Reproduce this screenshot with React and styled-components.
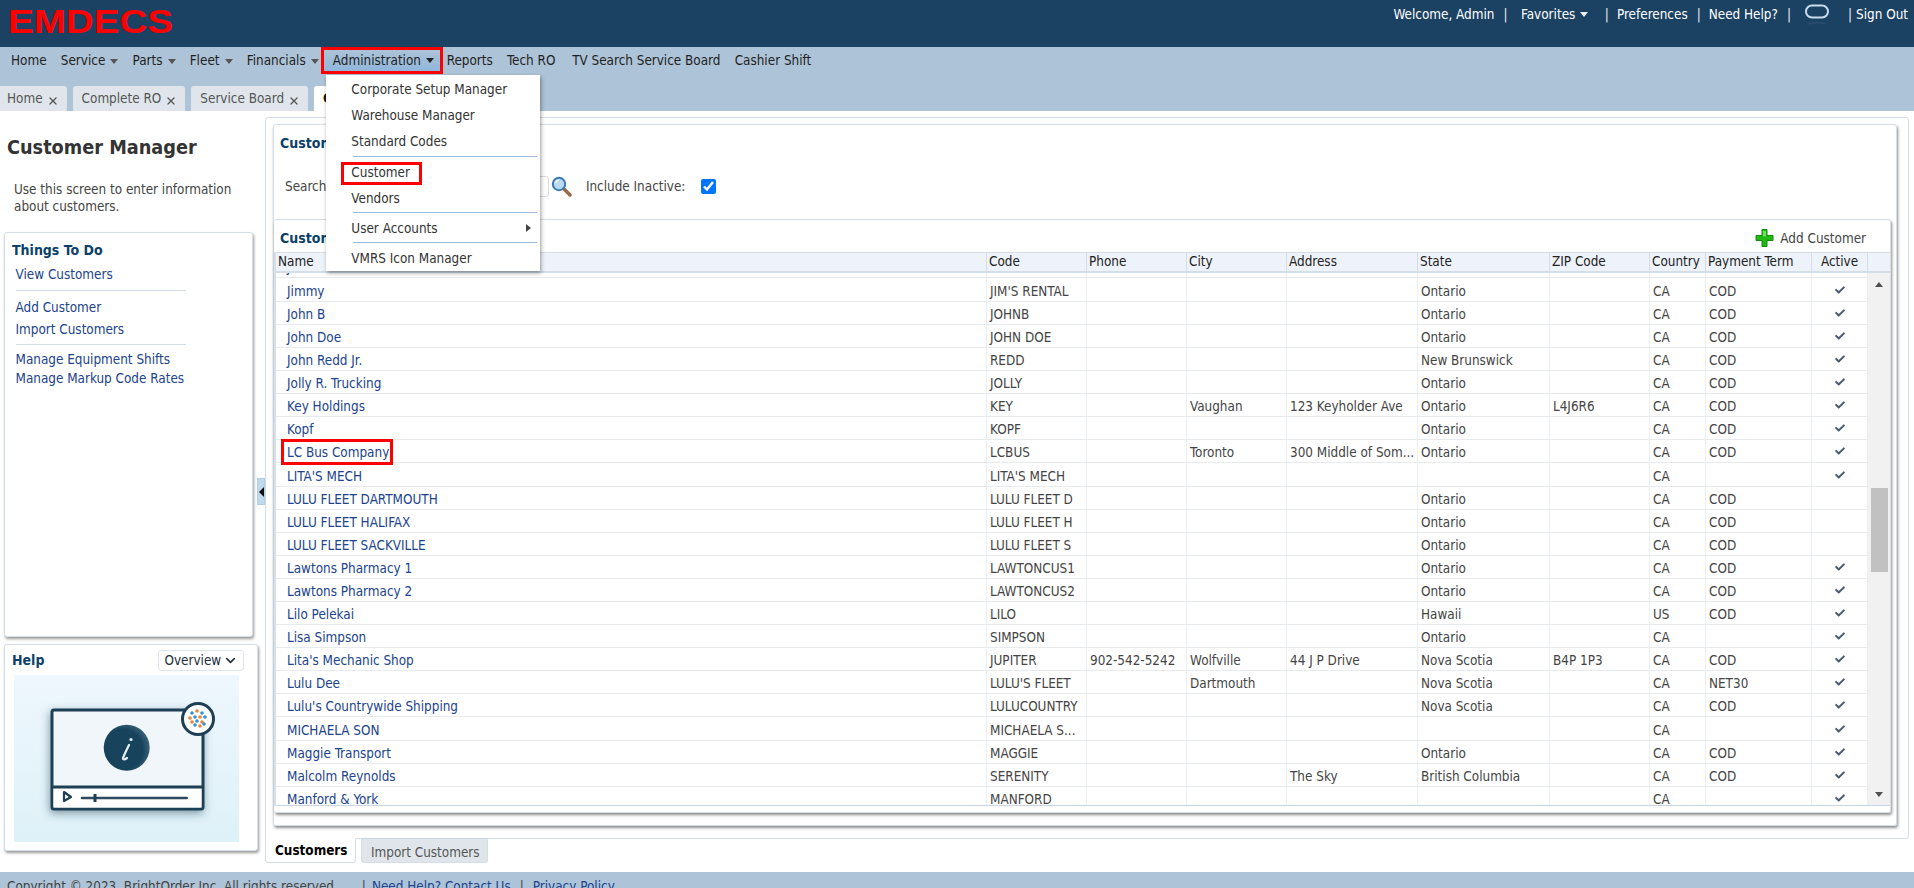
import React from "react";
import styled, { createGlobalStyle } from "styled-components";
import { X, ChevronDown } from "lucide-react";
import { FaCheck } from "react-icons/fa";

const FONT = `"DejaVu Sans Condensed", "Noto Sans", "Liberation Sans", sans-serif`;

const GlobalStyle = createGlobalStyle`
  html, body { margin: 0; padding: 0; background: #fff; }
  * { box-sizing: border-box; }
  body { font-family: ${FONT}; font-size: 13.4px; color: #444; overflow: hidden; }
`;

const Page = styled.div`
  width: 1914px;
  height: 888px;
  display: flex;
  flex-direction: column;
  overflow: hidden;
`;

/* top bar */
const TopBar = styled.header`
  height: 47px;
  flex: none;
  background: #1c4263;
  display: flex;
  justify-content: space-between;
  padding: 0 6px 0 8px;
`;
const TopLinks = styled.div`
  display: flex;
  align-items: center;
  height: 28px;
  color: #fff;
  white-space: nowrap;
`;
const TopLink = styled.span`
  display: flex;
  align-items: center;
  margin-right: ${(p) => p.$mr ?? 9}px;
`;
const Pipe = styled.span`
  margin-right: ${(p) => p.$mr ?? 8}px;
  color: #e8eef4;
`;
const DownCaret = styled.i`
  display: inline-block;
  width: 0;
  height: 0;
  margin-left: 5px;
  vertical-align: middle;
  border-left: 4.5px solid transparent;
  border-right: 4.5px solid transparent;
  border-top: 5px solid ${(p) => p.$color || "#555"};
`;

/* nav + tabs */
const NavArea = styled.div`
  height: 64px;
  flex: none;
  background: #adc3d7;
  display: flex;
  flex-direction: column;
  justify-content: space-between;
`;
const NavRow = styled.nav`
  display: flex;
  align-items: center;
  height: 27px;
  padding-left: 11px;
  gap: 14.2px;
  color: #1f1f1f;
  white-space: nowrap;
`;
const NavItem = styled.span`
  margin-left: ${(p) => p.$ml || 0}px;
`;
const NavActive = styled.span`
  position: relative;
  display: flex;
  align-items: center;
  height: 27px;
  margin: 0 -10.5px 0 -12px;
  padding: 0 6px 0 9px;
  border: 3px solid #f00;
  background: linear-gradient(#adc3d7, #8fb6dc);
`;
const Menu = styled.div`
  position: absolute;
  top: 25px;
  left: 2px;
  width: 214px;
  height: 196px;
  background: #fff;
  box-shadow: 1px 2px 4px rgba(0, 0, 0, 0.4);
  z-index: 5;
  color: #333;
  padding-top: 1px;
`;
const MenuItem = styled.div`
  position: relative;
  height: ${(p) => p.$h || 26}px;
  padding: ${(p) => p.$pt || 0}px 0 0 25.5px;
  display: flex;
  align-items: center;
  justify-content: space-between;
`;
const MenuBox = styled.span`
  position: relative;
  &::after {
    content: "";
    position: absolute;
    left: -10px;
    right: -12px;
    top: -3px;
    bottom: -5px;
    border: 3px solid #f00;
  }
`;
const MenuSep = styled.div`
  height: 1px;
  margin: ${(p) => p.$m || "0 3px 0 27px"};
  background: #9dbbdc;
`;
const RightCaret = styled.i`
  width: 0;
  height: 0;
  margin-right: 9px;
  border-top: 4.5px solid transparent;
  border-bottom: 4.5px solid transparent;
  border-left: 5px solid #444;
`;
const TabRow = styled.div`
  display: flex;
  gap: 6px;
  height: 25px;
  margin-left: -2px;
`;
const Tab = styled.div`
  display: flex;
  align-items: center;
  gap: 4px;
  padding: 0 8px 0 9px;
  border-radius: 3px 3px 0 0;
  white-space: nowrap;
  background: ${(p) => (p.$active ? "#fff" : "#dfe5eb")};
  color: ${(p) => (p.$active ? "#111" : "#555")};
  font-weight: ${(p) => (p.$active ? 700 : 400)};
  svg { margin-top: 5px; color: #555; }
`;

/* body */
const Body = styled.div`
  flex: 1;
  display: flex;
  min-height: 0;
`;
const Sidebar = styled.aside`
  width: 257px;
  flex: none;
  padding-top: 25px;
`;
const SideTitle = styled.h1`
  margin: 0 0 0 7px;
  font-size: 19.7px;
  line-height: 24px;
  font-weight: 700;
  color: #333;
`;
const SideText = styled.p`
  margin: 21px 0 17px 14px;
  line-height: 17px;
  color: #444;
`;
const Card = styled.section`
  margin-left: 4px;
  width: ${(p) => p.$w}px;
  height: ${(p) => p.$h}px;
  margin-bottom: 6.5px;
  border: 1px solid #d5dde6;
  border-radius: 3px;
  box-shadow: 1px 2px 3px rgba(0, 0, 0, 0.4);
  background: #fff;
`;
const CardTitle = styled.h2`
  margin: 0;
  font-size: 14px;
  line-height: 18px;
  font-weight: 700;
  color: #0b4169;
`;
const ThingsBody = styled.div`
  padding: 8px 0 0 7px;
`;
const SideLinks = styled.div`
  margin-top: 5px;
  padding-left: 3.5px;
  display: flex;
  flex-direction: column;
`;
const SideLink = styled.a`
  color: #20438c;
  line-height: ${(p) => p.$lh || 22}px;
`;
const SideSep = styled.div`
  height: 1px;
  width: 170px;
  margin: ${(p) => p.$m || "3.5px 0 6px"};
  background: #d5dde6;
`;
const HelpHead = styled.div`
  display: flex;
  justify-content: space-between;
  align-items: center;
  padding: 5px 13px 4px 7px;
`;
const HelpSelect = styled.div`
  width: 86px;
  height: 21px;
  display: flex;
  align-items: center;
  justify-content: space-between;
  padding: 0 5px 0 6px;
  border: 1px solid #dde5ec;
  border-radius: 3px;
  color: #222d3a;
`;
const HelpArt = styled.svg`
  display: block;
  margin-left: 9px;
`;

const Splitter = styled.div`
  width: 8px;
  flex: none;
  display: flex;
  align-items: center;
`;
const SplitHandle = styled.div`
  width: 9px;
  height: 27px;
  display: flex;
  align-items: center;
  justify-content: center;
  background: #c0d8f0;
  border: 1px solid #b4cde6;
  &::before {
    content: "";
    border-top: 5px solid transparent;
    border-bottom: 5px solid transparent;
    border-right: 5px solid #111;
  }
`;

const Main = styled.main`
  flex: 1;
  min-width: 0;
  padding: 6px 5px 9px 0;
  display: flex;
  flex-direction: column;
`;
const TabPanel = styled.div`
  flex: 1;
  min-height: 0;
  border: 1px solid #d5dde6;
  border-radius: 3px 3px 3px 0;
  padding: 6px 11px 12px 7px;
`;
const InnerPanel = styled.section`
  height: 100%;
  border: 1px solid #d5dde6;
  border-radius: 3px;
  box-shadow: 1px 2px 3px rgba(0, 0, 0, 0.45);
  padding: 0 5px 12px 0;
  display: flex;
  flex-direction: column;
`;
const PanelTitle = styled.h3`
  margin: 0;
  height: 37px;
  flex: none;
  padding: 8px 0 0 6px;
  font-size: 14px;
  line-height: 20px;
  font-weight: 700;
  color: #0b4169;
`;
const SearchRow = styled.div`
  height: 48px;
  flex: none;
  display: flex;
  align-items: center;
  padding-left: 11px;
  margin-bottom: 9px;
`;
const SearchInput = styled.input`
  width: 213px;
  height: 21px;
  margin: 0 2px 0 10px;
  border: 1px solid #d5dde6;
  border-radius: 3px;
`;
const IncludeLabel = styled.label`
  margin-left: 13.5px;
  margin-right: 15.5px;
`;
const IncludeBox = styled.input`
  width: 15px;
  height: 15px;
  margin: 0;
  accent-color: #0075ff;
`;

const GridPanel = styled.section`
  flex: 1;
  min-height: 0;
  border: 1px solid #d5dde6;
  border-left: none;
  border-radius: 3px;
  box-shadow: 1px 2px 3px rgba(0, 0, 0, 0.45);
  padding-bottom: 6px;
  display: flex;
  flex-direction: column;
`;
const GridTitleRow = styled.div`
  height: 32px;
  flex: none;
  display: flex;
  align-items: center;
  justify-content: space-between;
  padding: 4px 24px 0 6px;
`;
const GridTitle = styled.h3`
  margin: 0;
  font-size: 14px;
  font-weight: 700;
  color: #0b4169;
`;
const AddButton = styled.span`
  display: flex;
  align-items: center;
  gap: 6px;
  color: #444;
`;
const Table = styled.div`
  flex: 1;
  min-height: 0;
  display: flex;
  flex-direction: column;
  border-left: 2px solid #d5e0ea;
  border-bottom: 1px solid #c8d4e0;
`;
const COLS = "711px 100px 100px 100px 131px 132px 100px 56px 106px 56px";
const HeadRow = styled.div`
  height: 21px;
  flex: none;
  display: grid;
  grid-template-columns: ${COLS} 1fr;
  background: #eef2fa;
  border-top: 1px solid #d5dde6;
  border-bottom: 2px solid #d5dde6;
  position: relative;
  z-index: 1;
`;
const HeadCell = styled.div`
  padding-left: ${(p) => (p.$center ? 0 : 2)}px;
  text-align: ${(p) => (p.$center ? "center" : "left")};
  border-right: 1px solid #d5dde6;
  color: #222;
  line-height: 18px;
  white-space: nowrap;
  overflow: hidden;
  &:last-child { border-right: none; }
`;
const BodyWrap = styled.div`
  flex: 1;
  min-height: 0;
  display: flex;
`;
const Rows = styled.div`
  width: 1592px;
  flex: none;
  overflow: hidden;
`;
const Row = styled.div`
  height: ${(p) => (p.$tall ? 24 : 23)}px;
  margin-top: ${(p) => (p.$clip ? -18 : 0)}px;
  display: grid;
  grid-template-columns: ${COLS};
  border-bottom: 1px solid #e8ebee;
`;
const Cell = styled.div`
  padding: 3.5px 0 0 3px;
  border-right: 1px solid #eceff2;
  display: flex;
  align-items: center;
  justify-content: ${(p) => (p.$center ? "center" : "flex-start")};
  white-space: nowrap;
  overflow: hidden;
  color: #444;
`;
const CheckCell = styled(Cell)`
  padding: 0;
  justify-content: center;
`;
const NameCell = styled(Cell)`
  padding-left: 11px;
  overflow: visible;
`;
const NameLink = styled.a`
  position: relative;
  color: #20438c;
  ${(p) =>
    p.$marked &&
    `&::after {
      content: "";
      position: absolute;
      left: -6px;
      right: -4px;
      top: -6px;
      bottom: -5px;
      border: 3px solid #f00;
    }`}
`;
const ScrollTrack = styled.div`
  flex: 1;
  display: flex;
  flex-direction: column;
  align-items: center;
  background: #f1f1f1;
`;
const ScrollArrow = styled.div`
  height: 22px;
  flex: none;
  display: flex;
  align-items: center;
  justify-content: center;
  &::before {
    content: "";
    border-left: 4.5px solid transparent;
    border-right: 4.5px solid transparent;
    ${(p) => (p.$down ? "border-top" : "border-bottom")}: 5px solid #505050;
  }
`;
const ScrollThumb = styled.div`
  width: 17px;
  height: 84px;
  margin-top: 192.5px;
  margin-bottom: auto;
  background: #c1c1c1;
`;

const SubTabs = styled.div`
  height: 25px;
  flex: none;
  display: flex;
  margin-top: -1px;
`;
const SubTab = styled.div`
  height: 25px;
  padding: ${(p) => (p.$active ? "0 8px 0 9px" : "3px 7px 0 9px")};
  margin-right: ${(p) => (p.$active ? 4.5 : 0)}px;
  display: flex;
  align-items: center;
  white-space: nowrap;
  border: 1px solid #d5dde6;
  border-radius: 0 0 3px 3px;
  border-top: ${(p) => (p.$active ? "1px solid #fff" : "1px solid #c8d4e0")};
  background: ${(p) => (p.$active ? "#fff" : "#dfe5eb")};
  color: ${(p) => (p.$active ? "#000" : "#555")};
  font-weight: ${(p) => (p.$active ? 700 : 400)};
`;

const Footer = styled.footer`
  height: 16px;
  flex: none;
  background: #adc3d7;
  padding: 7px 0 0 7px;
  display: flex;
  white-space: nowrap;
  color: #444;
  overflow: hidden;
  line-height: 16px;
`;
const FootLink = styled.a`
  color: #20438c;
`;
const FootPipe = styled.span`
  margin: ${(p) => p.$m || "0 9px"};
`;

const rows = [
  { name: "James Redd", clip: true },
  { name: "Jimmy", tall: true, code: "JIM'S RENTAL", state: "Ontario", country: "CA", term: "COD", on: true },
  { name: "John B", code: "JOHNB", state: "Ontario", country: "CA", term: "COD", on: true },
  { name: "John Doe", code: "JOHN DOE", state: "Ontario", country: "CA", term: "COD", on: true },
  { name: "John Redd Jr.", code: "REDD", state: "New Brunswick", country: "CA", term: "COD", on: true },
  { name: "Jolly R. Trucking", code: "JOLLY", state: "Ontario", country: "CA", term: "COD", on: true },
  { name: "Key Holdings", code: "KEY", city: "Vaughan", address: "123 Keyholder Ave", state: "Ontario", zip: "L4J6R6", country: "CA", term: "COD", on: true },
  { name: "Kopf", code: "KOPF", state: "Ontario", country: "CA", term: "COD", on: true },
  { name: "LC Bus Company", marked: true, code: "LCBUS", city: "Toronto", address: "300 Middle of Som...", state: "Ontario", country: "CA", term: "COD", on: true },
  { name: "LITA'S MECH", tall: true, code: "LITA'S MECH", country: "CA", on: true },
  { name: "LULU FLEET DARTMOUTH", code: "LULU FLEET D", state: "Ontario", country: "CA", term: "COD" },
  { name: "LULU FLEET HALIFAX", code: "LULU FLEET H", state: "Ontario", country: "CA", term: "COD" },
  { name: "LULU FLEET SACKVILLE", code: "LULU FLEET S", state: "Ontario", country: "CA", term: "COD" },
  { name: "Lawtons Pharmacy 1", code: "LAWTONCUS1", state: "Ontario", country: "CA", term: "COD", on: true },
  { name: "Lawtons Pharmacy 2", code: "LAWTONCUS2", state: "Ontario", country: "CA", term: "COD", on: true },
  { name: "Lilo Pelekai", code: "LILO", state: "Hawaii", country: "US", term: "COD", on: true },
  { name: "Lisa Simpson", code: "SIMPSON", state: "Ontario", country: "CA", on: true },
  { name: "Lita's Mechanic Shop", code: "JUPITER", phone: "902-542-5242", city: "Wolfville", address: "44 J P Drive", state: "Nova Scotia", zip: "B4P 1P3", country: "CA", term: "COD", on: true },
  { name: "Lulu Dee", code: "LULU'S FLEET", city: "Dartmouth", state: "Nova Scotia", country: "CA", term: "NET30", on: true },
  { name: "Lulu's Countrywide Shipping", code: "LULUCOUNTRY", state: "Nova Scotia", country: "CA", term: "COD", on: true },
  { name: "MICHAELA SON", tall: true, code: "MICHAELA S...", country: "CA", on: true },
  { name: "Maggie Transport", code: "MAGGIE", state: "Ontario", country: "CA", term: "COD", on: true },
  { name: "Malcolm Reynolds", code: "SERENITY", address: "The Sky", state: "British Columbia", country: "CA", term: "COD", on: true },
  { name: "Manford & York", code: "MANFORD", country: "CA", on: true },
];

const heads = ["Name", "Code", "Phone", "City", "Address", "State", "ZIP Code", "Country", "Payment Term"];

const CloseIcon = () => <X size={12} strokeWidth={2.6} />;

const Logo = () => (
  <svg width="170" height="38" viewBox="0 0 170 38" role="img" aria-label="EMDECS logo">
    <text
      x="0"
      y="33"
      textLength="165"
      lengthAdjust="spacingAndGlyphs"
      fontFamily="Liberation Sans, sans-serif"
      fontWeight="700"
      fontSize="34"
      fill="#f00"
    >
      EMDECS
    </text>
  </svg>
);

const OracleMark = () => (
  <svg width="26" height="26" viewBox="0 0 26 26">
    <rect x="2" y="4.5" width="22" height="12" rx="6" fill="none" stroke="#c9dcee" strokeWidth="2" />
    <path d="M5 23 Q13 20 21 23" fill="none" stroke="#2d4f6e" strokeWidth="1.5" />
  </svg>
);

const Magnifier = () => (
  <svg width="21" height="21" viewBox="0 0 21 21">
    <path d="M12 12 L19 19" stroke="#9a6b4a" strokeWidth="3.5" strokeLinecap="round" />
    <circle cx="8" cy="8" r="6.2" fill="#b9d9f4" stroke="#3d78b8" strokeWidth="2" />
    <path d="M4.5 7 Q5.5 4.5 8 4" fill="none" stroke="#fff" strokeWidth="1.5" />
  </svg>
);

const PlusIcon = () => (
  <svg width="19" height="20" viewBox="0 0 19 20">
    <path
      d="M7 1.5 H12 V7.5 H18 V12.5 H12 V18.5 H7 V12.5 H1 V7.5 H7 Z"
      fill="#22b814"
      stroke="#128a0a"
      strokeWidth="1"
      strokeLinejoin="round"
    />
    <path d="M8 3 H11 V8.5 H8 Z" fill="#6fe05f" />
  </svg>
);

const dots = [
  [-6, -6, "#3a8fd0"], [-1, -8, "#e8843a"], [4, -6, "#3a8fd0"], [7, -2, "#3a8fd0"],
  [-8, -1, "#e8843a"], [-3, -2, "#3a8fd0"], [2, -2, "#e8843a"], [-6, 3, "#e8843a"],
  [-1, 2, "#3a8fd0"], [4, 3, "#e8843a"], [-3, 6, "#3a8fd0"], [2, 7, "#e8843a"], [6, 5, "#3a8fd0"],
];

const HelpIllustration = () => (
  <HelpArt width="225" height="167" viewBox="0 0 225 167" role="img" aria-label="Help video">
    <defs>
      <linearGradient id="helpBg" x1="0" y1="0" x2="0" y2="1">
        <stop offset="0" stopColor="#eef7fd" />
        <stop offset="1" stopColor="#def1f8" />
      </linearGradient>
      <filter id="helpShadow" x="-20%" y="-20%" width="140%" height="140%">
        <feDropShadow dx="-1" dy="3" stdDeviation="4" floodColor="#1f3f55" floodOpacity="0.5" />
      </filter>
      <radialGradient id="helpDot" cx="0.4" cy="0.55" r="0.6">
        <stop offset="0.75" stopColor="#17445c" />
        <stop offset="1" stopColor="#3a6074" />
      </radialGradient>
    </defs>
    <rect width="225" height="167" fill="url(#helpBg)" />
    <rect x="38" y="35" width="151" height="99" rx="2" fill="#f0f6fa" stroke="#1f3f55" strokeWidth="3" filter="url(#helpShadow)" />
    <rect x="39.5" y="112" width="148" height="20.5" fill="#fff" />
    <line x1="38" y1="112" x2="189" y2="112" stroke="#1f3f55" strokeWidth="3" />
    <circle cx="112.7" cy="72.7" r="23" fill="url(#helpDot)" />
    <path d="M115 70 Q111 78 109 83 Q109 86 113 83" fill="none" stroke="#e8eef2" strokeWidth="2.2" strokeLinecap="round" />
    <circle cx="117" cy="64.5" r="1.6" fill="#e8eef2" />
    <path d="M50 117 L57 122 L50 126 Z" fill="#fff" stroke="#1f3f55" strokeWidth="2.2" strokeLinejoin="round" />
    <line x1="68" y1="123" x2="172.7" y2="123" stroke="#2f4a5e" strokeWidth="2.6" strokeLinecap="round" />
    <line x1="81" y1="119" x2="81" y2="127" stroke="#1f3f55" strokeWidth="3" />
    <circle cx="184" cy="44" r="15.5" fill="#fff" stroke="#1f3f55" strokeWidth="3" />
    {dots.map(([dx, dy, c], i) => (
      <circle key={i} cx={184 + dx} cy={44 + dy} r="1.8" fill={c} />
    ))}
  </HelpArt>
);

const App = () => (
  <Page>
    <GlobalStyle />
    <TopBar>
      <Logo />
      <TopLinks>
        <TopLink>Welcome, Admin</TopLink>
        <Pipe $mr={13.5}>|</Pipe>
        <TopLink $mr={16.5}>
          Favorites
          <DownCaret $color="#e8eef4" />
        </TopLink>
        <Pipe>|</Pipe>
        <TopLink>Preferences</TopLink>
        <Pipe>|</Pipe>
        <TopLink>Need Help?</TopLink>
        <Pipe $mr={13}>|</Pipe>
        <TopLink $mr={18}>
          <OracleMark />
        </TopLink>
        <Pipe $mr={4}>|</Pipe>
        <TopLink $mr={0}>Sign Out</TopLink>
      </TopLinks>
    </TopBar>

    <NavArea>
      <NavRow>
        <NavItem>Home</NavItem>
        <NavItem>Service<DownCaret /></NavItem>
        <NavItem>Parts<DownCaret /></NavItem>
        <NavItem>Fleet<DownCaret /></NavItem>
        <NavItem>Financials<DownCaret /></NavItem>
        <NavActive>
          Administration
          <DownCaret $color="#222" />
          <Menu>
            <MenuItem>Corporate Setup Manager</MenuItem>
            <MenuItem>Warehouse Manager</MenuItem>
            <MenuItem $h={27}>Standard Codes</MenuItem>
            <MenuSep $m="1px 3px 0 27px" />
            <MenuItem $h={30}><MenuBox>Customer</MenuBox></MenuItem>
            <MenuItem $h={22}>Vendors</MenuItem>
            <MenuSep $m="3px 3px 0 27px" />
            <MenuItem $h={29} $pt={1.5}>User Accounts<RightCaret /></MenuItem>
            <MenuSep />
            <MenuItem $h={29} $pt={1.5}>VMRS Icon Manager</MenuItem>
          </Menu>
        </NavActive>
        <NavItem>Reports</NavItem>
        <NavItem>Tech RO</NavItem>
        <NavItem $ml={2.5}>TV Search Service Board</NavItem>
        <NavItem>Cashier Shift</NavItem>
      </NavRow>
      <TabRow>
        <Tab>Home<CloseIcon /></Tab>
        <Tab>Complete RO<CloseIcon /></Tab>
        <Tab>Service Board<CloseIcon /></Tab>
        <Tab $active>Customer Manager</Tab>
      </TabRow>
    </NavArea>

    <Body>
      <Sidebar>
        <SideTitle>Customer Manager</SideTitle>
        <SideText>
          Use this screen to enter information
          <br />
          about customers.
        </SideText>
        <Card $w={249} $h={405}>
          <ThingsBody>
            <CardTitle>Things To Do</CardTitle>
            <SideLinks>
              <SideLink>View Customers</SideLink>
              <SideSep />
              <SideLink>Add Customer</SideLink>
              <SideLink>Import Customers</SideLink>
              <SideSep $m="3.5px 0 5px" />
              <SideLink $lh={19}>Manage Equipment Shifts</SideLink>
              <SideLink $lh={19}>Manage Markup Code Rates</SideLink>
            </SideLinks>
          </ThingsBody>
        </Card>
        <Card $w={253.5} $h={207.5}>
          <HelpHead>
            <CardTitle>Help</CardTitle>
            <HelpSelect>
              Overview
              <ChevronDown size={15} strokeWidth={2.5} />
            </HelpSelect>
          </HelpHead>
          <HelpIllustration />
        </Card>
      </Sidebar>

      <Splitter>
        <SplitHandle />
      </Splitter>

      <Main>
        <TabPanel>
          <InnerPanel>
            <PanelTitle>Customer Search</PanelTitle>
            <SearchRow>
              Search
              <SearchInput />
              <Magnifier />
              <IncludeLabel>Include Inactive:</IncludeLabel>
              <IncludeBox type="checkbox" defaultChecked />
            </SearchRow>
            <GridPanel>
              <GridTitleRow>
                <GridTitle>Customers</GridTitle>
                <AddButton>
                  <PlusIcon />
                  Add Customer
                </AddButton>
              </GridTitleRow>
              <Table>
                <HeadRow>
                  {heads.map((h) => (
                    <HeadCell key={h}>{h}</HeadCell>
                  ))}
                  <HeadCell $center>Active</HeadCell>
                  <HeadCell />
                </HeadRow>
                <BodyWrap>
                  <Rows>
                    {rows.map((r) => (
                      <Row key={r.name} $tall={r.tall} $clip={r.clip}>
                        <NameCell>
                          <NameLink $marked={r.marked}>{r.name}</NameLink>
                        </NameCell>
                        <Cell>{r.code}</Cell>
                        <Cell>{r.phone}</Cell>
                        <Cell>{r.city}</Cell>
                        <Cell>{r.address}</Cell>
                        <Cell>{r.state}</Cell>
                        <Cell>{r.zip}</Cell>
                        <Cell>{r.country}</Cell>
                        <Cell>{r.term}</Cell>
                        <CheckCell>
                          {r.on && <FaCheck size={10} color="#4a5a75" />}
                        </CheckCell>
                      </Row>
                    ))}
                  </Rows>
                  <ScrollTrack>
                    <ScrollArrow />
                    <ScrollThumb />
                    <ScrollArrow $down />
                  </ScrollTrack>
                </BodyWrap>
              </Table>
            </GridPanel>
          </InnerPanel>
        </TabPanel>
        <SubTabs>
          <SubTab $active>Customers</SubTab>
          <SubTab>Import Customers</SubTab>
        </SubTabs>
      </Main>
    </Body>

    <Footer>
      Copyright © 2023, BrightOrder Inc. All rights reserved.
      <FootPipe $m="0 6px 0 24px">|</FootPipe>
      <FootLink>Need Help? Contact Us</FootLink>
      <FootPipe>|</FootPipe>
      <FootLink>Privacy Policy</FootLink>
    </Footer>
  </Page>
);

export default App;
